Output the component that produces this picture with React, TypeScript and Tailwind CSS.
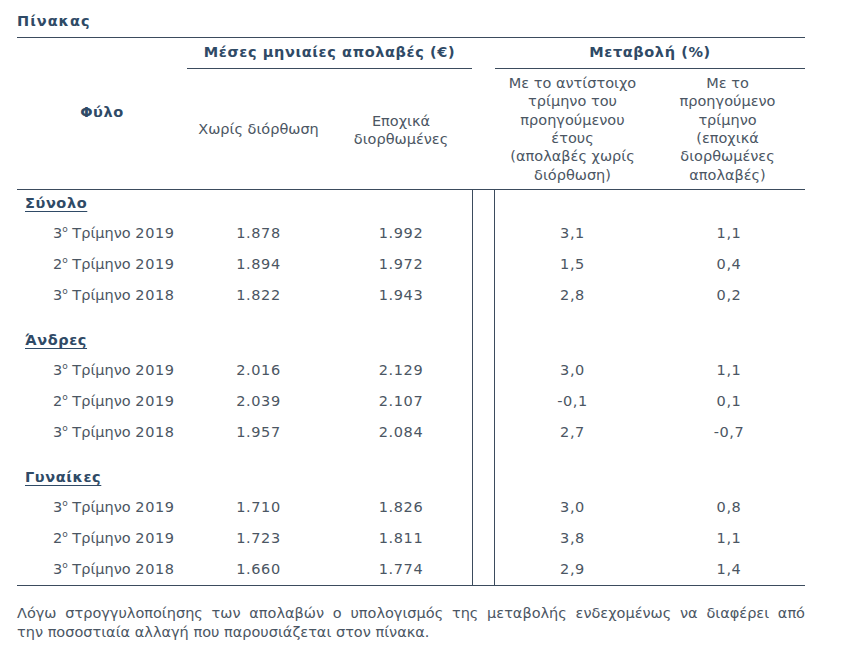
import React from "react";

const font = { fontFamily: '"DejaVu Sans", Verdana, sans-serif' };

type Row = { ord: string; label: string; year: string; a: string; b: string; c: string; d: string };
type Section = { title: string; rows: Row[] };

const sections: Section[] = [
  {
    title: "Σύνολο",
    rows: [
      { ord: "3", label: "Τρίμηνο", year: "2019", a: "1.878", b: "1.992", c: "3,1", d: "1,1" },
      { ord: "2", label: "Τρίμηνο", year: "2019", a: "1.894", b: "1.972", c: "1,5", d: "0,4" },
      { ord: "3", label: "Τρίμηνο", year: "2018", a: "1.822", b: "1.943", c: "2,8", d: "0,2" },
    ],
  },
  {
    title: "Άνδρες",
    rows: [
      { ord: "3", label: "Τρίμηνο", year: "2019", a: "2.016", b: "2.129", c: "3,0", d: "1,1" },
      { ord: "2", label: "Τρίμηνο", year: "2019", a: "2.039", b: "2.107", c: "-0,1", d: "0,1" },
      { ord: "3", label: "Τρίμηνο", year: "2018", a: "1.957", b: "2.084", c: "2,7", d: "-0,7" },
    ],
  },
  {
    title: "Γυναίκες",
    rows: [
      { ord: "3", label: "Τρίμηνο", year: "2019", a: "1.710", b: "1.826", c: "3,0", d: "0,8" },
      { ord: "2", label: "Τρίμηνο", year: "2019", a: "1.723", b: "1.811", c: "3,8", d: "1,1" },
      { ord: "3", label: "Τρίμηνο", year: "2018", a: "1.660", b: "1.774", c: "2,9", d: "1,4" },
    ],
  },
];

const grid = "grid grid-cols-[170px_143px_142px_23px_155px_155px]";
const gap = "border-l border-r border-[#3b4b5d]";
const head = "font-bold text-[#2f4a66] tracking-[0.6px]";
const num = "flex items-center justify-center tracking-[0.6px]";

export default function App() {
  return (
    <div className="bg-white w-[853px] h-[667px] text-[14.5px] text-[#4b5663]" style={font}>
      <div className="pl-[17px] w-[805px]">
        <div className={`h-[37px] flex items-center pt-[6px] ${head} tracking-[1px]`}>Πίνακας</div>
        {/* header */}
        <div className={`${grid} grid-rows-[31px_120px] border-t border-b border-[#3b4b5d]`}>
          <div className={`row-span-2 flex items-center justify-center pb-[2px] ${head}`}>Φύλο</div>
          <div className={`col-span-2 flex items-center justify-center border-b border-[#3b4b5d] ${head}`}>
            Μέσες μηνιαίες απολαβές (€)
          </div>
          <div></div>
          <div className={`col-span-2 flex items-center justify-center border-b border-[#3b4b5d] ${head}`}>
            Μεταβολή (%)
          </div>
          <div className="flex items-center justify-center text-center pt-[2px]">Χωρίς διόρθωση</div>
          <div className="flex items-center justify-center text-center leading-[18px] pt-[2px]">
            Εποχικά
            <br />
            διορθωμένες
          </div>
          <div></div>
          <div className="flex items-center justify-center text-center leading-[18.3px]">
            Με το αντίστοιχο
            <br />
            τρίμηνο του
            <br />
            προηγούμενου
            <br />
            έτους
            <br />
            (απολαβές χωρίς
            <br />
            διόρθωση)
          </div>
          <div className="flex items-center justify-center text-center leading-[18.3px]">
            Με το
            <br />
            προηγούμενο
            <br />
            τρίμηνο
            <br />
            (εποχικά
            <br />
            διορθωμένες
            <br />
            απολαβές)
          </div>
        </div>
        {/* body */}
        <div className="border-b border-[#3b4b5d]">
          {sections.map((s, si) => (
            <div key={s.title} className={grid}>
              {si > 0 && (
                <>
                  <div className="h-[16px]"></div>
                  <div></div>
                  <div></div>
                  <div className={gap}></div>
                  <div></div>
                  <div></div>
                </>
              )}
              <div className="h-[28px] flex items-center pl-[8px]">
                <span className={`underline underline-offset-[3px] decoration-[1px] ${head}`}>{s.title}</span>
              </div>
              <div></div>
              <div></div>
              <div className={gap}></div>
              <div></div>
              <div></div>
              {s.rows.map((r, ri) => (
                <React.Fragment key={ri}>
                  <div className="h-[31px] flex items-center pl-[36px] whitespace-nowrap">
                    <span>
                      {r.ord}
                      <sup className="text-[9px] top-[-6px]">ο</sup> {r.label}{" "}
                      <span className="tracking-[0.6px]">{r.year}</span>
                    </span>
                  </div>
                  <div className={num}>{r.a}</div>
                  <div className={num}>{r.b}</div>
                  <div className={gap}></div>
                  <div className={num}>{r.c}</div>
                  <div className={`${num} pl-[3px]`}>{r.d}</div>
                </React.Fragment>
              ))}
            </div>
          ))}
        </div>
        <p className="mt-[18px] leading-[19px]">
          <span className="block text-justify [text-align-last:justify] whitespace-nowrap">
            Λόγω στρογγυλοποίησης των απολαβών ο υπολογισμός της μεταβολής ενδεχομένως να διαφέρει από
          </span>
          <span className="block">την ποσοστιαία αλλαγή που παρουσιάζεται στον πίνακα.</span>
        </p>
      </div>
    </div>
  );
}
